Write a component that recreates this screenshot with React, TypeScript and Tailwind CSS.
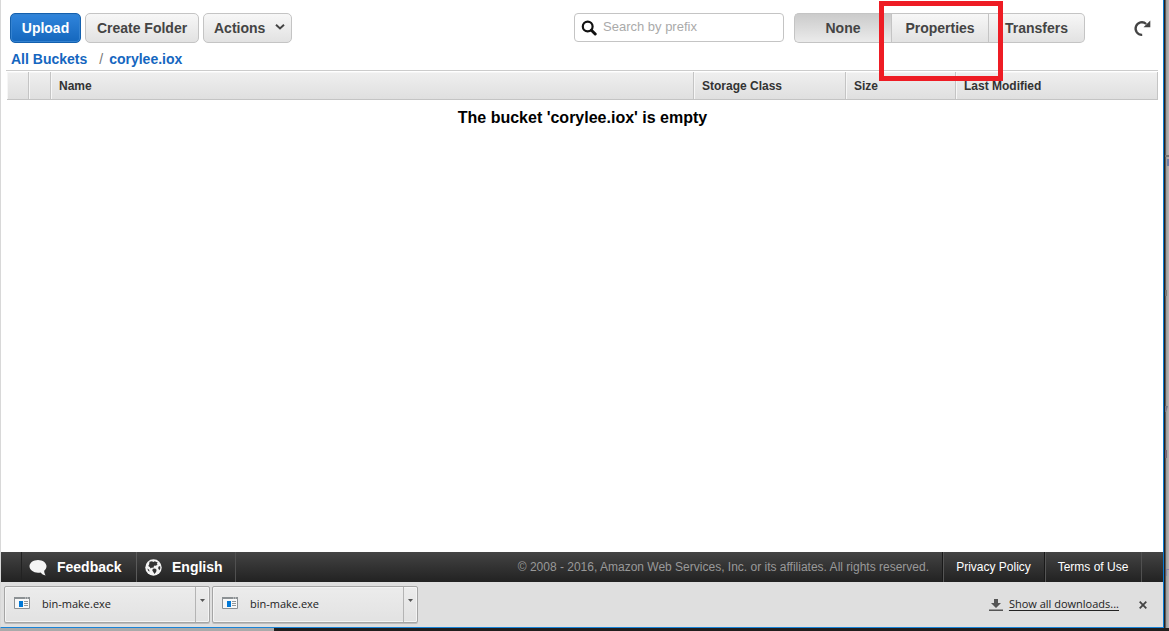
import React from "react";

const toolButton =
  "h-[30px] border border-[#c4c4c4] text-sm font-bold text-[#444] whitespace-nowrap bg-linear-to-b from-[#f7f7f7] to-[#e2e2e2]";
const link = "text-[#1566c0]";

function SearchIcon() {
  return (
    <svg viewBox="0 0 16 16" className="size-4" fill="none" stroke="#111" aria-hidden="true">
      <circle cx="6.7" cy="6.5" r="4.9" strokeWidth="2.2" />
      <path d="M10.4 10.2 14.2 14" strokeWidth="3" strokeLinecap="round" />
    </svg>
  );
}

function RefreshIcon() {
  return (
    <svg viewBox="0 0 18 18" className="size-[18px]" aria-hidden="true">
      <path d="M9.200 15.900A6.300 6.300 0 1 1 13.200 5" fill="none" stroke="#444" strokeWidth="2.300" />
      <path d="M17.300 1.500v6.700H10.500z" fill="#444" />
    </svg>
  );
}

function SpeechIcon() {
  return (
    <svg viewBox="0 0 18 17" className="h-[17px] w-[18px]" fill="#f4f4f4" aria-hidden="true">
      <path d="M9 .9C4.300.9.5 3.700.5 7.300s3.800 6.400 8.500 6.400c.9 0 1.800-.1 2.600-.3 1.200 1.500 2.900 2.700 5 3-1-1.400-1.400-3.100-1.400-4.600 1.400-1.200 2.300-2.700 2.300-4.500C17.500 3.700 13.700.9 9 .9z" />
    </svg>
  );
}

function GlobeIcon() {
  return (
    <svg viewBox="0 0 17 17" className="size-[17px]" aria-hidden="true">
      <circle cx="8.5" cy="8.5" r="8.2" fill="#f4f4f4" />
      <path
        d="M4.500 2.800 7 2.200l1.300.9 1.500-.8 2.900 1.300-1 1.300 1 .6-1.900 1.300-1.300-.3-1 1.400-.1 1.200-1.400-.7-1.300 1-1-1.300L3.300 7l.9-1.800zM7.800 9.800l2.300-.2 1.500 1.200-.4 2-1.700 2.100-1.200-1.800-1-1.600zM13.400 7.800l1.700-.8.3 2.200-1 2-1.200-1.600zM2.300 9.400l1.600 1.100.8 2-1.300-.6z"
        fill="#333"
      />
    </svg>
  );
}

function ProgramIcon() {
  return (
    <svg viewBox="0 0 16 12" className="h-3 w-4" aria-hidden="true">
      <path d="M.5.5h15v11H.5z" fill="#f8f8f8" stroke="#8c9194" />
      <path d="M0 0h16v2H0z" fill="#8c9194" />
      <path d="M11 1h1M13 1h1" stroke="#fff" strokeWidth=".7" />
      <path d="M5 4h4v6H5z" fill="#0078d7" />
      <path d="M10 4.500h4M10 6.500h4M10 8.500h4" stroke="#92979a" />
    </svg>
  );
}

function Download({ name }: { name: string }) {
  return (
    <div className="flex h-[37px] w-[206px] rounded-xs border border-[#a5a5a5] bg-linear-to-b from-[#ececec] to-[#e2e2e2] shadow-[inset_0_0_0_1px_#f4f4f4,0_1px_0_#bdbdbd]">
      <button className="flex min-w-0 flex-1 items-center gap-3 px-[9px] text-left">
        <span className="pb-[3px]">
          <ProgramIcon />
        </span>
        <span className="truncate">{name}</span>
      </button>
      <button
        aria-label={`Options for ${name}`}
        className="flex w-[14px] justify-center border-l border-[#b4b4b4] pt-3"
      >
        <svg viewBox="0 0 5 3" className="h-[3px] w-[5px]" fill="#555" aria-hidden="true">
          <path d="M0 0h5L2.500 3z" />
        </svg>
      </button>
    </div>
  );
}

const columns = [
  { label: "", width: "w-[22px]" },
  { label: "", width: "w-[22px]" },
  { label: "Name", width: "" },
  { label: "Storage Class", width: "w-[152px]" },
  { label: "Size", width: "w-[110px]" },
  { label: "Last Modified", width: "w-[202px]" },
];

export default function App() {
  return (
    <div className="flex min-h-screen flex-col bg-[#211e1d] font-['Liberation_Sans',Arial,sans-serif] text-[#333]">
      <div className="flex flex-1">
        <div className="flex min-w-0 flex-1 flex-col border-r border-b border-l border-r-[#0878d0] border-b-[#1883d7] border-l-[#d8d8d8] bg-white">
          <header className="flex items-center pt-[13px] pr-3 pl-[9px]">
            <div className="flex gap-1">
              <button className="h-[30px] w-[71px] rounded-[5px] border border-[#1360ae] bg-linear-to-b from-[#3085dc] to-[#1467bd] text-sm font-bold text-white shadow-[inset_0_0_0_1px_#3482d0]">
                Upload
              </button>
              <button className={`${toolButton} w-[114px] rounded-[5px]`}>Create Folder</button>
              <button className={`${toolButton} flex w-[89px] items-center justify-between rounded-[5px] pr-[6px] pl-[10px]`}>
                Actions
                <svg viewBox="0 0 10 6" className="mb-[2px] h-[6px] w-[10px]" aria-hidden="true">
                  <path d="m1 .8 4 3.600 4-3.600" fill="none" stroke="#444" strokeWidth="2" />
                </svg>
              </button>
            </div>
            <label className="mb-px ml-auto flex h-[29px] w-[210px] items-center gap-[6px] rounded-[4px] border border-[#c4c4c4] px-[6px]">
              <SearchIcon />
              <input
                type="text"
                aria-label="Search by prefix"
                placeholder="Search by prefix"
                className="min-w-0 flex-1 pb-[2px] text-[13px] outline-none placeholder:text-[#aaa]"
              />
            </label>
            <div className="ml-[10px] flex">
              <button className="h-[30px] w-[97px] rounded-l-[5px] border border-r-0 border-[#c4c4c4] bg-linear-to-b from-[#cbcbcb] to-[#ebebeb] text-sm font-bold text-[#444]">
                None
              </button>
              <div className="relative">
                <button className={`${toolButton} w-[98px]`}>Properties</button>
                <div className="pointer-events-none absolute -top-3 -left-3 z-10 h-20 w-[124px] border-5 border-[#ee1c24]" />
              </div>
              <button className={`${toolButton} w-24 rounded-r-[5px] border-l-0`}>
                Transfers
              </button>
            </div>
            <button aria-label="Refresh" className="ml-12">
              <RefreshIcon />
            </button>
          </header>

          <nav aria-label="Breadcrumb" className="flex h-[27px] items-center px-[10px] pt-[5px] text-sm font-bold">
            <a href="#buckets" className={link}>
              All Buckets
            </a>
            <span className="mr-[6px] ml-3 font-normal text-[#777]">/</span>
            <a href="#corylee.iox" className={link}>
              corylee.iox
            </a>
          </nav>

          <main className="flex-1 px-[5px]">
            <div className="border-t border-[#ccc] pt-px pl-px">
              <table className="w-full table-fixed border-separate border-spacing-0 text-left text-xs">
                <thead>
                  <tr className="bg-linear-to-b from-[#efefef] to-[#dfdfdf]">
                    {columns.map((column, i) => (
                      <th
                        key={i}
                        scope="col"
                        className={`${column.width} h-7 border-r border-b border-[#c4c4c4] p-0 pl-2 font-bold shadow-[inset_1px_1px_0_#f6f6f6]`}
                      >
                        {column.label}
                      </th>
                    ))}
                  </tr>
                </thead>
                <tbody>
                  <tr>
                    <td colSpan={6} className="p-0 pt-[6px] text-center text-base font-bold text-black">
                      The bucket 'corylee.iox' is empty
                    </td>
                  </tr>
                </tbody>
              </table>
            </div>
          </main>

          <footer className="flex h-[30px] items-stretch bg-linear-to-b from-[#444] to-[#222] pl-5 text-white">
            <button className="flex w-[116px] items-center gap-[10px] border-x border-l-[#222] border-r-[#5a5a5a] pl-[7px] text-sm font-bold">
              <SpeechIcon />
              Feedback
            </button>
            <button className="flex w-[99px] items-center gap-[10px] border-r border-[#505050] pl-2 text-sm font-bold">
              <GlobeIcon />
              English
            </button>
            <p className="ml-auto self-center pr-[13px] text-xs text-[#999]">
              © 2008 - 2016, Amazon Web Services, Inc. or its affiliates. All rights reserved.
            </p>
            <a href="#privacy" className="flex w-[102px] items-center justify-center border-l border-[#191919] text-xs shadow-[inset_1px_0_0_#555]">
              Privacy Policy
            </a>
            <a href="#terms" className="mr-[21px] flex w-[98px] items-center justify-center border-x border-l-[#191919] border-r-[#505050] text-xs shadow-[inset_1px_0_0_#555]">
              Terms of Use
            </a>
          </footer>

          <section
            aria-label="Downloads"
            className="flex h-[45px] items-center gap-[2px] bg-[#dfdfdf] pr-4 pl-[3px] font-['Open_Sans','Noto_Sans',sans-serif] text-[11px] text-[#222]"
          >
            <Download name="bin-make.exe" />
            <Download name="bin-make.exe" />
            <a href="#downloads" className="ml-auto flex items-center gap-[6px]">
              <svg viewBox="0 0 14 14" className="size-[14px]" fill="#555" aria-hidden="true">
                <path d="M5 1h4v4h3L7 10 2 5h3zM0 11.500h14v1.500H0z" />
              </svg>
              <span className="underline underline-offset-2">Show all downloads...</span>
            </a>
            <button aria-label="Close downloads" className="ml-[18px]">
              <svg viewBox="0 0 8 8" className="size-2" stroke="#444" strokeWidth="1.8" aria-hidden="true">
                <path d="m.7.7 6.600 6.600M7.300.7.7 7.300" />
              </svg>
            </button>
          </section>
        </div>
        <svg viewBox="0 0 5 628" preserveAspectRatio="none" className="w-[5px] self-stretch bg-linear-to-r from-[#222] from-20% via-[#999] via-40% to-[#b8b8b8]" aria-hidden="true">
          <path d="M1 155h4v2H1z" fill="#777" />
          <path d="M3 159h2v7H3z" fill="#6b7fa8" />
          <path d="M1 290h2v6H1z" fill="#777" />
          <path d="M1 406h3l-2 6H1z" fill="#778" />
          <path d="M1 450h2v8H1z" fill="#767" />
          <path d="M2 569h1v7H2zM3 569h2v1H3z" fill="#88a" />
        </svg>
      </div>
      <div className="h-[3px] w-[274px] bg-[#aaa]" />
    </div>
  );
}
